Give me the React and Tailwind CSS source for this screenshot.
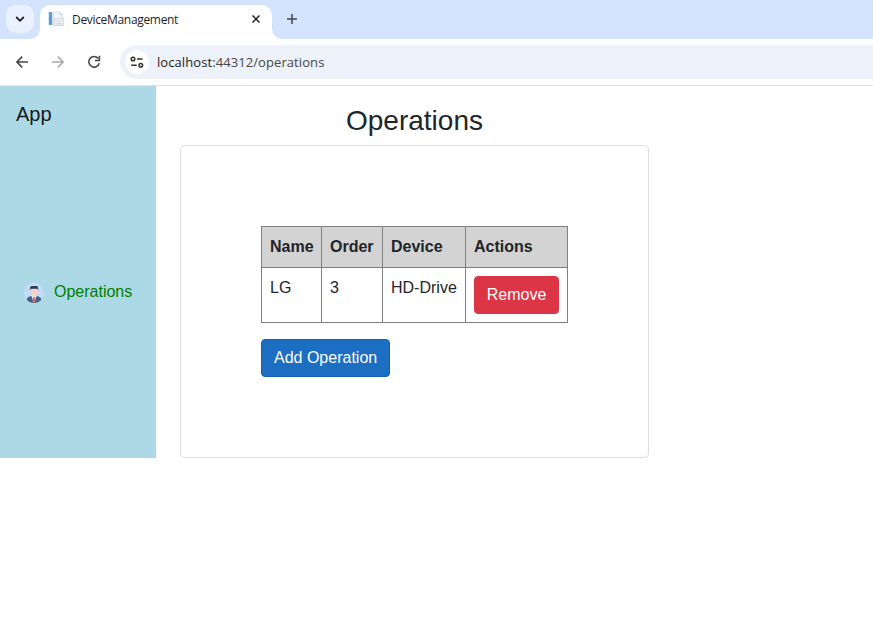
function TabStrip() {
  return (
    <div className="flex h-[39px] items-start bg-[#d3e2fd]">
      <div className="ml-1.5 mt-[5px] flex size-7 items-center justify-center rounded-[10px] bg-[#e9f1fe]">
        <svg width="10" height="10" viewBox="0 0 10 10" fill="none" stroke="#1f1f1f" strokeWidth="1.8">
          <path d="M1.2 3 5 6.8 8.8 3" />
        </svg>
      </div>
      <svg className="mt-[29px] -ml-1" width="10" height="10" viewBox="0 0 10 10">
        <path d="M10 0v10H0A10 10 0 0 0 10 0Z" fill="#fff" />
      </svg>
      <div className="mt-[5px] flex h-[34px] w-[232px] items-start rounded-t-[10px] bg-white pl-2">
        <svg className="mt-1.5" width="16" height="16" viewBox="0 0 16 16">
          <path d="M1 1h3v13H1z" fill="#55a0d8" />
          <path d="M.2 1H1v13H.2zM4 1h.8v13H4z" fill="#cfe2ee" />
          <path d="M5.4 .9H12L14.5 3.5V14.5H5.4z" fill="#f3f4f7" stroke="#d8dce4" strokeWidth=".8" />
          <path d="M6.4 7.4h9.2v7.2H6.4z" fill="#eef0f5" stroke="#cdd2dc" strokeWidth=".8" />
          <path d="M11.5 .9 14.5 4h-3zM8.500 9.500h5v1h-5zM8.500 12h5v1.500h-5z" fill="#cdd3de" />
        </svg>
        <span className="ml-2 mt-1.5 w-[170px] whitespace-nowrap font-['Open_Sans',sans-serif] text-[12px] leading-[17px] tracking-[-0.32px] text-[#1f1f1f]">
          DeviceManagement
        </span>
        <svg className="ml-[10px] mt-[10px]" width="8" height="8" viewBox="0 0 8 8" stroke="#1f1f1f" strokeWidth="1.5">
          <path d="m.5.5 7 7m0-7-7 7" />
        </svg>
      </div>
      <svg className="mt-[29px]" width="10" height="10" viewBox="0 0 10 10">
        <path d="M0 0v10h10A10 10 0 0 1 0 0Z" fill="#fff" />
      </svg>
      <svg className="ml-[5px] mt-3.5" width="10" height="10" viewBox="0 0 10 10" stroke="#474747" strokeWidth="1.5">
        <path d="M5 0v10M0 5h10" />
      </svg>
    </div>
  );
}

function Toolbar() {
  return (
    <div className="flex h-[47px] items-start border-b border-[#dfe1e5] bg-white pt-1.5">
      <svg className="ml-4 mt-[11px]" width="12" height="12" viewBox="0 0 12 12" fill="none" stroke="#474747" strokeWidth="1.6">
        <path d="M12 6H1M6.2.6.9 6l5.3 5.4" />
      </svg>
      <svg className="ml-6 mt-[11px]" width="12" height="12" viewBox="0 0 12 12" fill="none" stroke="#a9a9a9" strokeWidth="1.5">
        <path d="M0 6h11M5.8.6 11.1 6l-5.3 5.4" />
      </svg>
      <svg className="ml-6 mt-[11px] overflow-visible" width="12" height="12" viewBox="0 0 12 12">
        <path d="M10.2 2.5A5.3 5.3 0 1 0 11.2 7.200" fill="none" stroke="#474747" strokeWidth="1.6" />
        <path d="M12.200 -.2v5.400H7V3.700h3.600V-.2Z" fill="#474747" />
      </svg>
      <div className="ml-5 flex h-[34px] flex-1 items-center rounded-l-full bg-[#ecf1fa] pl-[5px]">
        <div className="flex size-6 items-center justify-center rounded-full bg-white">
          <svg width="14" height="12" viewBox="0 0 14 12" fill="none" stroke="#303030" strokeWidth="1.5">
            <circle cx="3" cy="3" r="1.8" />
            <path d="M7 3h5.5M1.2 9.2h5.5" />
            <circle cx="10.8" cy="9.2" r="1.8" />
          </svg>
        </div>
        <span className="ml-2 whitespace-nowrap font-['Open_Sans',sans-serif] text-[13px] leading-5 tracking-[0.08px] text-[#474747]">
          <span className="text-[#1f1f1f]">localhost</span>:44312/operations
        </span>
      </div>
    </div>
  );
}

function Avatar() {
  return (
    <svg width="20" height="20" viewBox="0 0 20 20">
      <circle cx="10" cy="10" r="10" fill="#c3dafd" />
      <path d="M2.8 17q.2-3 3.500-3.700l3.700-.8 3.700.8q3.300.7 3.500 3.700A10 10 0 0 1 2.800 17Z" fill="#3f6382" />
      <path d="m7.3 12.800 2.700-1.300 2.700 1.300L10 19.800Z" fill="#f4f4f4" />
      <path d="M6.3 6h7.4q.2 6.800-3.700 7Q6.100 12.800 6.300 6Z" fill="#f5d3c4" />
      <path d="M5.900 7.500V5Q6 3 8 3h4.500q1.700 0 1.700 2.200v2.300l-.9-1.800H6.800Z" fill="#2c3e50" />
      <path d="M9.200 13.800h1.600l.7 5L10 20l-1.500-1.200Z" fill="#dc6a6a" />
    </svg>
  );
}

const rows = [{ name: "LG", order: 3, device: "HD-Drive" }];

export default function App() {
  return (
    <div className="min-h-[630px] bg-white font-['Liberation_Sans',Arial,sans-serif] text-base leading-6 text-[#212529]">
      <TabStrip />
      <Toolbar />
      <div className="flex items-start">
        <aside className="h-[372px] w-[156px] bg-[#add8e6]">
          <div className="pl-4 pt-[13px] text-xl leading-[30px] text-black/90">App</div>
          <a className="mt-[151px] flex items-start pl-6 text-[#008000]">
            <span className="mt-[3px]"><Avatar /></span>
            <span className="ml-2.5">Operations</span>
          </a>
        </aside>
        <main className="ml-6 w-[469px] pt-[18px]">
          <h3 className="mb-[7px] text-center text-[28px] font-normal leading-[34px]">Operations</h3>
          <section className="h-[313px] rounded border border-[#dfdfdf] pl-20 pt-20">
            <table className="w-[307px] table-fixed border-collapse border border-[#808080] text-left align-top">
              <colgroup>
                <col className="w-[60px]" />
                <col className="w-[61px]" />
                <col className="w-[83px]" />
                <col className="w-[102px]" />
              </colgroup>
              <thead className="bg-[#d3d3d3]">
                <tr>
                  {["Name", "Order", "Device", "Actions"].map((h) => (
                    <th key={h} className="border border-[#808080] p-2 font-bold">{h}</th>
                  ))}
                </tr>
              </thead>
              <tbody>
                {rows.map((r) => (
                  <tr key={r.name} className="align-top">
                    <td className="border border-[#808080] p-2">{r.name}</td>
                    <td className="border border-[#808080] p-2">{r.order}</td>
                    <td className="whitespace-nowrap border border-[#808080] p-2">{r.device}</td>
                    <td className="border border-[#808080] p-2">
                      <button className="block w-[85px] rounded border border-[#dc3545] bg-[#dc3545] py-1.5 text-white">Remove</button>
                    </td>
                  </tr>
                ))}
              </tbody>
            </table>
            <button className="mt-4 block rounded border border-[#1861ac] bg-[#1b6ec2] px-3 py-1.5 text-white">Add Operation</button>
          </section>
        </main>
      </div>
    </div>
  );
}
